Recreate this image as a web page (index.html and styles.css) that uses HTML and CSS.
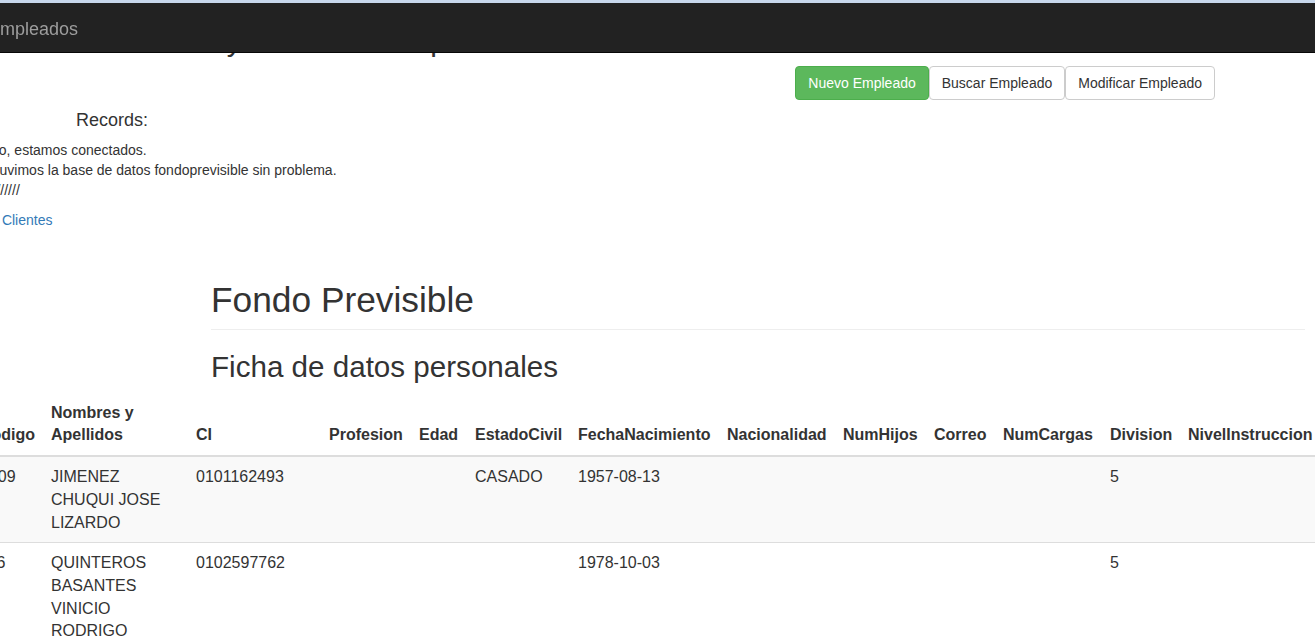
FILE: index.html
```
<!DOCTYPE html>
<html lang="es">
<head>
<meta charset="utf-8">
<title>Empleados</title>
<link rel="stylesheet" href="styles.css">
</head>
<body>
<nav class="navbar">
  <span class="brand">Empleados</span>
</nav>

<main class="page">
  <h2 class="top-title">Fondo Previsible y Datos del Empleado</h2>

  <div class="actions">
    <button class="btn btn-success">Nuevo Empleado</button>
    <button class="btn btn-default">Buscar Empleado</button>
    <button class="btn btn-default">Modificar Empleado</button>
  </div>

  <h4 class="records">Records:</h4>

  <div class="log">
    <p class="log-lines">Listo, estamos conectados.<br>Obtuvimos la base de datos fondoprevisible sin problema.<br>///////////</p>
    <p class="log-link"><a href="#">Ver Clientes</a></p>
  </div>

  <section class="fondo">
    <div class="page-header">
      <h1>Fondo Previsible</h1>
    </div>
    <h2 class="subtitle">Ficha de datos personales</h2>
  </section>

  <table class="table">
    <colgroup>
      <col class="c-codigo">
      <col class="c-nombres">
      <col class="c-ci">
      <col class="c-prof">
      <col class="c-edad">
      <col class="c-civil">
      <col class="c-fecha">
      <col class="c-nac">
      <col class="c-hijos">
      <col class="c-correo">
      <col class="c-cargas">
      <col class="c-div">
      <col class="c-nivel">
      <col class="c-extra">
    </colgroup>
    <thead>
      <tr>
        <th>Codigo</th>
        <th>Nombres y Apellidos</th>
        <th>CI</th>
        <th>Profesion</th>
        <th>Edad</th>
        <th>EstadoCivil</th>
        <th>FechaNacimiento</th>
        <th>Nacionalidad</th>
        <th>NumHijos</th>
        <th>Correo</th>
        <th>NumCargas</th>
        <th>Division</th>
        <th>NivelInstruccion</th>
        <th>Direccion</th>
      </tr>
    </thead>
    <tbody>
      <tr class="odd">
        <td>1009</td>
        <td>JIMENEZ CHUQUI JOSE LIZARDO</td>
        <td>0101162493</td>
        <td></td>
        <td></td>
        <td>CASADO</td>
        <td>1957-08-13</td>
        <td></td>
        <td></td>
        <td></td>
        <td></td>
        <td>5</td>
        <td></td>
        <td></td>
      </tr>
      <tr>
        <td>116</td>
        <td>QUINTEROS BASANTES VINICIO RODRIGO</td>
        <td>0102597762</td>
        <td></td>
        <td></td>
        <td></td>
        <td>1978-10-03</td>
        <td></td>
        <td></td>
        <td></td>
        <td></td>
        <td>5</td>
        <td></td>
        <td></td>
      </tr>
    </tbody>
  </table>
</main>
</body>
</html>
```

FILE: styles.css
```
html, body {
  margin: 0;
  padding: 0;
  overflow: hidden;
  background: #fff;
}

body {
  font-family: "Liberation Sans", Arial, Helvetica, sans-serif;
  font-size: 14px;
  line-height: 20px;
  color: #333;
}

.navbar {
  position: fixed;
  top: 0;
  left: 0;
  right: 0;
  height: 49px;
  background: #222;
  border-top: 3px solid #c8d8ec;
  border-bottom: 1px solid #080808;
  z-index: 10;
}

.brand {
  display: block;
  margin-left: -12px;
  padding-top: 16px;
  font-size: 18px;
  line-height: 20px;
  color: #9d9d9d;
}

.page {
  display: flex;
  flex-direction: column;
  align-items: flex-start;
}

.top-title {
  margin: 24px 0 0 -5px;
  font-size: 30px;
  line-height: 33px;
  font-weight: 500;
  white-space: nowrap;
}

.actions {
  align-self: stretch;
  display: flex;
  justify-content: flex-end;
  padding-right: 100px;
  margin-top: 9px;
}

.btn {
  font-family: inherit;
  font-size: 14px;
  line-height: 20px;
  padding: 6px 12px;
  border: 1px solid #ccc;
  border-radius: 4px;
  background: #fff;
  color: #333;
  margin: 0;
  cursor: pointer;
}

.btn-success {
  background: #5cb85c;
  border-color: #4cae4c;
  color: #fff;
}

.records {
  margin: 10px 0 10px 76px;
  font-size: 18px;
  line-height: 20px;
  font-weight: 500;
}

.log {
  margin-left: -23px;
  white-space: nowrap;
}

.log p {
  margin: 0 0 10px;
}

.log a {
  color: #337ab7;
  text-decoration: none;
}

.fondo {
  align-self: stretch;
  margin: 40px 10px 0 211px;
}

.page-header {
  padding-bottom: 9px;
  border-bottom: 1px solid #eee;
}

.page-header h1 {
  margin: 0;
  font-size: 35.3px;
  line-height: 39.6px;
  font-weight: 500;
}

.subtitle {
  margin: 20px 0 11px;
  font-size: 29.6px;
  line-height: 33px;
  font-weight: 500;
}

.table {
  margin-left: -28px;
  border-collapse: collapse;
  border-spacing: 0;
  table-layout: fixed;
  width: 1488px;
  font-size: 16px;
  line-height: 22.86px;
}

.c-codigo { width: 71px; }
.c-nombres { width: 145px; }
.c-ci { width: 133px; }
.c-prof { width: 90px; }
.c-edad { width: 56px; }
.c-civil { width: 103px; }
.c-fecha { width: 149px; }
.c-nac { width: 116px; }
.c-hijos { width: 91px; }
.c-correo { width: 69px; }
.c-cargas { width: 107px; }
.c-div { width: 78px; }
.c-nivel { width: 140px; }
.c-extra { width: 140px; }

.table th,
.table td {
  padding: 8px;
  text-align: left;
}

.table th {
  vertical-align: bottom;
  font-weight: bold;
  border-bottom: 2px solid #ddd;
}

.table td {
  vertical-align: top;
  padding-top: 9px;
  padding-bottom: 7px;
  border-top: 1px solid #ddd;
}

.table thead + tbody tr:first-child td {
  border-top: 0;
}

.table tr.odd td {
  background: #f9f9f9;
}
```
